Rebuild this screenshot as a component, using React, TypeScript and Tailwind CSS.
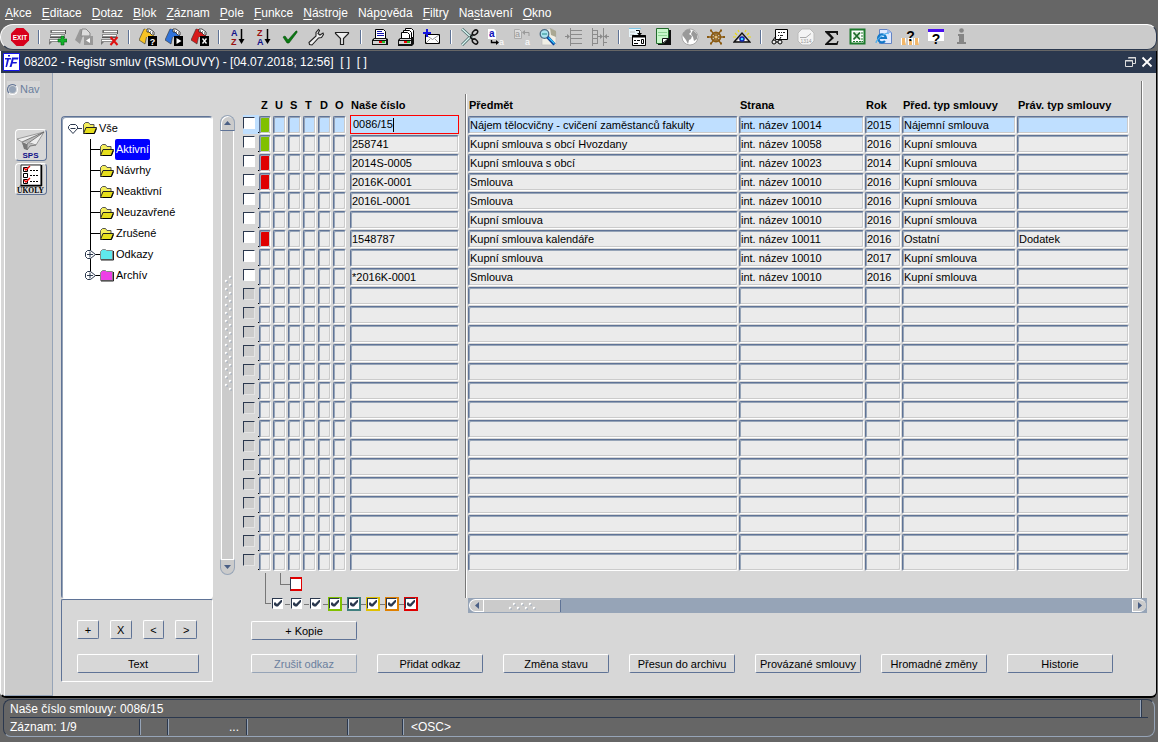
import type { ReactNode } from 'react'
import clsx from 'clsx'

const raised = 'border border-t-white border-l-white border-r-[#5f7396] border-b-[#5f7396]'
const sunken = 'border border-t-[#5f7396] border-l-[#5f7396] border-r-white border-b-white'

const menu: [string, string, string][] = [
  ['', 'A', 'kce'],
  ['', 'E', 'ditace'],
  ['', 'D', 'otaz'],
  ['', 'B', 'lok'],
  ['', 'Z', 'áznam'],
  ['', 'P', 'ole'],
  ['', 'F', 'unkce'],
  ['', 'N', 'ástroje'],
  ['Náp', 'o', 'věda'],
  ['', 'F', 'iltry'],
  ['Na', 's', 'tavení'],
  ['', 'O', 'kno'],
]

/* Toolbar drawings, all on an 18x18 grid */

function RecordLines() {
  return (
    <>
      <path d="M2 2h15v3H2zM1 6h15v4H1zM0 11h12v3H0z" fill="#8c8c8c" />
      <path d="M3 3.500h13M2 7.500h13M1 12.500h11" stroke="#fff" />
      <path d="M2 2v3M16.500 2v4M1 9.500h15" stroke="#555" />
      <path d="M0 14v3l3-3z" fill="#777" />
    </>
  )
}

function QueryCard({ fill, children }: { fill: string; children: ReactNode }) {
  return (
    <>
      <path d="M5 1l4 1-3 14-6-4z" fill={fill} stroke="#333" strokeWidth="0.6" />
      <path d="M6 1h4l5 4v4H6z" fill={fill} />
      <path d="M8 1h3l4 3v3h-2l-3-3H8z" fill="#fff" stroke="#222" strokeWidth="0.8" />
      <path d="M9 3h1M11 4h1M13 5h1" stroke="#222" />
      <path d="M9 8h9v10H9z" />
      {children}
    </>
  )
}

function SortMark({ top, bottom }: { top: string; bottom: string }) {
  return (
    <>
      <text x="2" y="8" fontSize="9" fontWeight="700" fill={top === 'A' ? '#118' : '#911'}>{top}</text>
      <text x="2" y="17" fontSize="9" fontWeight="700" fill={bottom === 'A' ? '#118' : '#911'}>{bottom}</text>
      <path d="M12.500 1v12" stroke="#000" strokeWidth="1.500" />
      <path d="M9.500 11h6l-3 5z" />
    </>
  )
}

const exit = (
  <>
    <path d="M5.500 0h7L18 5.500v7L12.500 18h-7L0 12.500v-7z" fill="#d8001c" />
    <text x="9" y="11.500" fontSize="6.500" fontWeight="700" textAnchor="middle" fill="#fff">EXIT</text>
  </>
)
const insertRow = (
  <>
    <RecordLines />
    <path d="M12 8h3v3h3v3h-3v3h-3v-3H9v-3h3z" fill="#13b32b" stroke="#075d14" strokeWidth="0.600" />
  </>
)
const copyRow = (
  <>
    <path d="M5 1l5 1-5 14-5-4z" fill="#999" />
    <path d="M7 1h4l4 4v3H6z" fill="#ddd" stroke="#888" />
    <path d="M9 8h9v9H9z" fill="#999" />
    <path d="M15 10v5l-4-2.500z" fill="#fff" />
  </>
)
const deleteRow = (
  <>
    <RecordLines />
    <path d="M9.500 9l7 8M16.500 9l-7 8" stroke="#e01010" strokeWidth="2" />
  </>
)
const enterQuery = (
  <QueryCard fill="#f7c325">
    <text x="13.500" y="16.500" fontSize="9" fontWeight="700" textAnchor="middle" fill="#fff">?</text>
  </QueryCard>
)
const runQuery = (
  <QueryCard fill="#2f72d8">
    <path d="M11.500 10v6l5-3z" fill="#fff" />
  </QueryCard>
)
const cancelQuery = (
  <QueryCard fill="#d81b1b">
    <path d="M11.500 10.500l4 5M15.500 10.500l-4 5" stroke="#fff" strokeWidth="1.300" />
  </QueryCard>
)
const check = <path d="M2 9l2-1 3 4 8-9h1v1.500L8 15H6z" fill="#0a7a12" stroke="#064f0b" strokeWidth="0.600" />
const wrench = (
  <path
    d="M11.500 1.500l1 1-1.500 3 2 1.500 3-2 .5 1.500-2 3-3 .5-6.500 7-2.500-.500-.500-2 7-6.500V4.500z"
    fill="#eee" stroke="#222" strokeWidth="1.100"
  />
)
const funnel = <path d="M2.500 4.500h13v1l-5 5v6h-3v-6l-5-5z" fill="#eee" stroke="#222" strokeWidth="1.200" />
const printer = (
  <>
    <path d="M4.500 1.500h8l2 2v7h-10z" fill="#fff" stroke="#000" />
    <path d="M6 3.500h5M6 5.500h7M6 7.500h7" stroke="#11a" />
    <path d="M3 10h12l2 1v6H1v-5z" fill="#111" />
    <path d="M3 11h12v1H3zM2 13h13v3H2z" fill="#d4d4d4" />
    <path d="M8 13h3v2H8z" fill="#e00" />
    <path d="M11 13h3v2h-3z" fill="#2b2" />
  </>
)
const printers = (
  <>
    <path d="M8.500 .5h6l2 2v7h-8z" fill="#fff" stroke="#000" />
    <path d="M6.500 2.500h6l2 2v6h-8z" fill="#fff" stroke="#000" />
    <path d="M4.500 4.500h6l2 2v5h-8z" fill="#fff" stroke="#000" />
    <path d="M3 10h11l3-1v7l-2 2H1v-6z" fill="#111" />
    <path d="M3 11h11v1H3zM2 13h12v3H2z" fill="#d4d4d4" />
    <path d="M7 13h3v2H7z" fill="#e00" />
    <path d="M10 13h3v2h-3z" fill="#2b2" />
  </>
)
const mail = (
  <>
    <path d="M2.500 6.500h14v9h-14z" fill="#fff" stroke="#000" />
    <path d="M3 7l6.500 4.500L16 7M3 15l4-4M16 15l-4-4" stroke="#777" fill="none" strokeWidth="0.800" />
    <path d="M3 1h2v3h3v2H5v3H3V6H0V4h3z" fill="#1515e0" />
  </>
)
const scissors = (
  <>
    <path d="M1 1l10 9M1 17L11 7" stroke="#4c6b6b" strokeWidth="3" />
    <path d="M1 1l10 9M1 17L11 7" stroke="#d9f6f2" strokeWidth="1.400" />
    <ellipse cx="14" cy="4.500" rx="3" ry="2" transform="rotate(-40 14 4.500)" fill="none" stroke="#111" strokeWidth="1.500" />
    <ellipse cx="14" cy="13.500" rx="3" ry="2" transform="rotate(40 14 13.500)" fill="none" stroke="#111" strokeWidth="1.500" />
    <path d="M9 9l3-3M9 8.500l3 3.500" stroke="#111" strokeWidth="1.600" />
  </>
)
const copyText = (
  <>
    <path d="M1 1h6l2 2v8H1z" fill="#fff" />
    <text x="2" y="9" fontSize="10" fontWeight="700" fill="#11b">a</text>
    <path d="M4.500 12v2.500h5" stroke="#000" fill="none" strokeWidth="1.400" />
    <path d="M9 12l3 2.500L9 17z" />
    <text x="12" y="17" fontSize="9" fill="#fff">a</text>
  </>
)
const pasteText = (
  <>
    <path d="M1.500 1.500h5l2 2v7h-7z" fill="#ddd" stroke="#aaa" />
    <text x="2" y="9" fontSize="9" fill="#999">a</text>
    <path d="M16 8V4.500h-4" stroke="#999" fill="none" />
    <path d="M12 2L9 4.500 12 7z" fill="#999" />
    <text x="12" y="17" fontSize="9" fill="#fff">a</text>
  </>
)
const find = (
  <>
    <path d="M5 1h9l3 3v13H3V9z" fill="#f0efe6" stroke="#bbb" strokeWidth="0.700" />
    <path d="M11 0l6 3v6l-5-2z" fill="#aaa893" />
    <circle cx="5.500" cy="6" r="4.300" fill="#a8e2ee" stroke="#4b6b84" strokeWidth="1.300" />
    <path d="M3 6h5" stroke="#288" />
    <path d="M8.500 9l7 7.500" stroke="#0b3f98" strokeWidth="3.200" />
    <path d="M9.500 9.500l6 6" stroke="#35c8ff" strokeWidth="1.300" />
  </>
)
const listIn = (
  <>
    <path d="M5.500 0v18M6 2.500h11M6 6.500h11M6 10.500h11M6 15.500h11M0 8.500h3" stroke="#8b8b8b" fill="none" />
    <path d="M2 6v5l3-2.500z" fill="#8b8b8b" />
  </>
)
const listOut = (
  <>
    <path d="M1.500 0v18M2 2.500h4M2 6.500h4M2 10.500h4M2 15.500h4M6.500 2v14M12.500 0v18M7 8.500h3M13 8.500h5M13 14.500h3" stroke="#8b8b8b" fill="none" />
    <path d="M9 6v5l3-2.500zM16 6v5l-3-2.500z" fill="#8b8b8b" />
  </>
)
const calcForm = (
  <>
    <path d="M0 0h11v9H0z" fill="#e9f6fb" />
    <path d="M0 .5h12" stroke="#7ec6e6" />
    <path d="M1 4h5M1 7h4" stroke="#bbb" />
    <path d="M3.500 7.500h13v10h-13z" fill="#fff" stroke="#000" />
    <path d="M3 8.500h14" stroke="#000" strokeWidth="2" />
    <path d="M5 12.500h2M8 12.500h3M5 15.500h4" stroke="#000" />
    <path d="M12.500 11.500h2v4h-2z" fill="none" stroke="#000" />
    <path d="M7 2.500h3.500V6" stroke="#000" fill="none" />
    <path d="M8 5h5l-2.500 3z" />
  </>
)
const note = (
  <>
    <path d="M3 2h13v15H3z" fill="#111" />
    <path d="M1.500 .5h12v15h-12z" fill="#c9f7cb" stroke="#226b2c" />
    <path d="M3 4.500h9M3 7.500h9" stroke="#8ed494" />
    <path d="M7.500 15.500v-5h6z" fill="#fff" stroke="#111" />
    <path d="M14 10v6H8z" fill="#111" />
  </>
)
const globe = (
  <>
    <circle cx="9" cy="9" r="8" fill="#fff" stroke="#999" strokeWidth="0.800" />
    <path d="M2 5l3-3 4-1 1 3-2 2 3 2-1 3-2 1-1 4-2-4-3-4zM12 2l4 4v5l-3 2-1-4-2-3z" fill="#999" />
  </>
)
const wheel = (
  <>
    <circle cx="9" cy="9" r="4.500" fill="none" stroke="#8a5a12" strokeWidth="1.800" />
    <path d="M9 5v8M1 9h16M4 2.500l10 13M14 2.500L4 15.500" stroke="#8a5a12" strokeWidth="1.300" />
    <circle cx="9" cy="9" r="1.500" fill="#e6c27c" />
    <path d="M3 1.500h2v2H3zM13 1.500h2v2h-2zM3 14.500h2v2H3zM13 14.500h2v2h-2zM0 8h2v2H0zM16 8h2v2h-2z" fill="#8a5a12" />
  </>
)
const eye = (
  <>
    <path d="M2 5l2 2M5 2l1 2M13 2l-1 2M16 5l-2 2M0 9h3M15 9h3" stroke="#eadb10" strokeWidth="1.200" />
    <path d="M1 14L9 5l8 9z" fill="#b9b9b9" stroke="#111" strokeWidth="1.300" />
    <path d="M4 13q5-7 10 0z" fill="#fff" />
    <circle cx="9" cy="11" r="2.800" fill="#1020b0" />
    <circle cx="9" cy="11" r="1.300" fill="#38e0ff" />
  </>
)
const inspect = (
  <>
    <path d="M4.500 1.500h12v10h-12z" fill="#fff" stroke="#000" />
    <path d="M7 4.500h2M10 4.500h1M12 4.500h2M7 7.500h1M9 7.500h3" stroke="#222" />
    <circle cx="3" cy="14" r="2" fill="#eee" stroke="#000" />
    <circle cx="9" cy="14" r="2" fill="#eee" stroke="#000" />
    <path d="M2 12l3-4M8 12l2-3M5 14h2" stroke="#000" />
  </>
)
const clock = (
  <>
    <path d="M5 1h8l4 4v8l-4 4H5l-4-4V5z" fill="#f4f4f4" stroke="#bbb" />
    <path d="M3 9.500h6l5-4" stroke="#aaa" fill="none" />
    <text x="9" y="15" fontSize="5" textAnchor="middle" fill="#999">1314</text>
  </>
)
const sum = (
  <path d="M2 3h13v4h-1l-1-2H6.500l4.500 5-5.500 5h8l1-2h1l-1 4H2v-1l6-6-6-6z" fill="#111" />
)
const excel = (
  <>
    <path d="M1.500 1.500h14v14h-14z" fill="#fff" stroke="#1d7a2d" strokeWidth="2" />
    <path d="M4 4h7v7H4z" fill="#d8edd9" />
    <path d="M4.500 4.500l6.500 7M11 4.500l-6.500 7" stroke="#1d6a2a" strokeWidth="1.800" />
    <path d="M13 4v10M4 13.500h10" stroke="#1d7a2d" strokeDasharray="2 1" />
  </>
)
const browser = (
  <>
    <path d="M4.500 1.500h8l4 3v11h-12z" fill="#dfeaff" stroke="#6383c4" />
    <path d="M12 1v4h5" fill="#9ab6ea" />
    <path d="M3 10h8a4 4 0 1 0-1 3" fill="none" stroke="#1479c8" strokeWidth="2.200" />
    <path d="M1 15q0-4 9-9 4-2 3 0" fill="none" stroke="#4fb0ee" strokeWidth="1.200" />
  </>
)
const people = (
  <>
    <path d="M0 10h5v7H0zM7 10h5v7H7zM13 10h5v7h-5z" fill="#fff" />
    <path d="M1 10h3v3l1 4H1zM8 12h3v5H8zM14 10h3v3l1 4h-4z" fill="#f2b76a" />
    <text x="9.500" y="13" fontSize="14" fontWeight="700" textAnchor="middle" fill="#000">?</text>
  </>
)
const windowHelp = (
  <>
    <path d="M1 2h16v11H1z" fill="#fff" />
    <path d="M1 1h16v3H1z" fill="#4a10f0" />
    <text x="9" y="16" fontSize="14" fontWeight="700" textAnchor="middle" fill="#000">?</text>
  </>
)
const info = (
  <>
    <circle cx="8.500" cy="2.500" r="2.300" fill="#858585" />
    <path d="M5 6h6v8h2v2H4v-2h2V8H5z" fill="#858585" />
  </>
)

const tools: [string, ReactNode][][] = [
  [['Konec', exit]],
  [['Nový záznam', insertRow], ['Kopírovat záznam', copyRow], ['Smazat záznam', deleteRow]],
  [['Zadat dotaz', enterQuery], ['Spustit dotaz', runQuery], ['Zrušit dotaz', cancelQuery]],
  [
    ['Seřadit vzestupně', <SortMark top="A" bottom="Z" />],
    ['Seřadit sestupně', <SortMark top="Z" bottom="A" />],
    ['Potvrdit', check],
    ['Nástroje', wrench],
    ['Filtr', funnel],
  ],
  [['Tisk', printer], ['Tisk sestav', printers], ['Pošta', mail]],
  [
    ['Vyjmout', scissors],
    ['Kopírovat', copyText],
    ['Vložit', pasteText],
    ['Hledat', find],
    ['Rozbalit', listIn],
    ['Sbalit', listOut],
  ],
  [['Formulář', calcForm], ['Poznámka', note], ['Web', globe], ['Řízení', wheel], ['Náhled', eye]],
  [
    ['Detail', inspect],
    ['Čas', clock],
    ['Součet', sum],
    ['Excel', excel],
    ['Prohlížeč', browser],
    ['Uživatelé', people],
    ['Nápověda okna', windowHelp],
    ['Informace', info],
  ],
]

function Toolbar() {
  return (
    <div className="mr-px flex h-[26px] items-center rounded-l-2xl rounded-r-xl border border-white border-r-[#2b384e] border-b-[#2b384e] bg-[#cbcbcb] pl-1.5">
      {tools.map((group, i) => (
        <div key={i} className="flex items-center">
          {i > 0 && <div className="mx-[5px] h-3.5 w-0.5 border-r border-l border-r-white border-l-[#5f7396]" />}
          {group.map(([label, icon]) => (
            <button key={label} type="button" aria-label={label} className="flex h-6 w-[26px] items-center justify-center">
              <svg viewBox="0 0 18 18" className="size-[18px]" fill="#000">{icon}</svg>
            </button>
          ))}
        </div>
      ))}
    </div>
  )
}

function TitleBar() {
  return (
    <div className="flex h-[22px] items-center gap-1 bg-[#2b384e] pr-[3px] pl-0.5 text-[12px] text-white">
      <svg viewBox="0 0 17 18" className="h-[18px] w-[17px]">
        <path d="M.5.5h16v17H.5z" fill="#fff" stroke="#1414e8" />
        <path d="M2 5h6v1.500H6L4 14H2.500L4 6.500H2zM5 2h2v1.500H5z" fill="#1616d8" />
        <path d="M9 4.500h6.500L15 6.500h-4.500L10 9h4l-.5 1.500h-4L8.500 14h-2L8 9z" fill="#1616d8" />
      </svg>
      <h1 className="flex-1 whitespace-pre">08202 - Registr smluv (RSMLOUVY) - [04.07.2018; 12:56]  [ ]  [ ]</h1>
      <button type="button" aria-label="Obnovit">
        <svg viewBox="0 0 12 12" className="size-3" fill="none" stroke="#ddd">
          <path d="M3.500 1.500h7v6h-3M3 2h8M.5 4.500h7v6h-7zM0 5h8" />
        </svg>
      </button>
      <button type="button" aria-label="Zavřít">
        <svg viewBox="0 0 12 12" className="size-3" stroke="#fff" strokeWidth="1.800">
          <path d="M1.500 1.500l9 9M10.500 1.500l-9 9" />
        </svg>
      </button>
    </div>
  )
}

function SideBar() {
  return (
    <aside className="flex w-[49px] shrink-0 flex-col border-r border-b border-l border-l-white border-r-[#96a4b7] border-b-[#96a4b7] bg-[#cbcbcb]">
      <label className="mt-2 ml-0.5 flex h-[17px] w-[33px] items-center gap-0.5 bg-[#d7d7d7] text-[11px] text-[#6b7f9e]">
        <input
          type="radio"
          disabled
          className="size-[11px] shrink-0 appearance-none rounded-full border border-[#5f7396] border-r-white border-b-white bg-[#96a4b7] shadow-[inset_0_0_0_1px_#d7d7d7]"
        />
        Nav
      </label>
      <div className="mt-[31px] ml-2.5 flex flex-col gap-0.5">
        <button type="button" aria-label="SPS" className={clsx('size-8 rounded-sm bg-[#d7d7d7]', raised)}>
          <svg viewBox="0 0 30 30" className="size-[30px]">
            <path d="M1 9l27-7-8 13-6-2-5 6-3-7z" fill="#eee" stroke="#888" strokeWidth="0.800" />
            <path d="M6 12L28 2 11 14v6l3-4 6-1" fill="#bbb" stroke="#666" strokeWidth="0.800" />
            <path d="M6 12l2 7 3 1v-6z" fill="#777" />
            <text x="14.500" y="28" fontSize="8" fontWeight="700" textAnchor="middle" fill="#111188">SPS</text>
          </svg>
        </button>
        <button type="button" aria-label="Úkoly" className={clsx('size-8 rounded-sm bg-[#d7d7d7]', raised)}>
          <svg viewBox="0 0 30 30" className="size-[30px]">
            <path d="M5 1h20v21H5z" fill="#fff" stroke="#333" />
            <path d="M25.500 1v21M5 21.500h21" stroke="#000" strokeWidth="1.500" />
            <path d="M7.500 3.500h4v4h-4zM7.500 9.500h4v4h-4zM7.500 15.500h4v4h-4z" fill="none" stroke="#000" />
            <path d="M8 4l2 2 4-4M8 16l2 2 4-4" stroke="#e00" strokeWidth="1.400" fill="none" />
            <path d="M14 6.500h9M14 11.500h9M14 17.500h9" stroke="#000" strokeDasharray="2 1" />
            <text x="14.500" y="29" fontSize="7.500" fontWeight="700" textAnchor="middle" fontFamily="Liberation Serif, serif">ÚKOLY</text>
          </svg>
        </button>
      </div>
    </aside>
  )
}

function OpenFolder() {
  return (
    <svg viewBox="0 0 14 12" className="h-3 w-3.5">
      <path d="M.5 10.500v-8l2-2h3l1.500 2h4v3" fill="#f4ee5a" stroke="#555" />
      <path d="M.5 11.500l2.500-6h10.500l-2.500 6z" fill="#e6de1c" stroke="#222" />
      <path d="M3 11.500h8.500l2-5" stroke="#000" fill="none" />
    </svg>
  )
}

function ClosedFolder({ fill }: { fill: string }) {
  return (
    <svg viewBox="0 0 14 12" className="h-3 w-3.5">
      <path d="M.5 10.500v-8l2-2h3l1 1h6v9z" fill={fill} stroke="#888" />
      <path d="M1 11h12.500V2" stroke="#222" fill="none" />
    </svg>
  )
}

const nodes = [
  { label: 'Aktivní', selected: true },
  { label: 'Návrhy' },
  { label: 'Neaktivní' },
  { label: 'Neuzavřené' },
  { label: 'Zrušené' },
  { label: 'Odkazy', fill: '#5fe9ee' },
  { label: 'Archív', fill: '#ee3fe6' },
]

function Tree() {
  return (
    <ul className={clsx('flex-1 rounded-sm bg-white text-[11px] shadow-[inset_1px_1px_#96a4b7]', sunken)}>
      <li>
        <div className="flex h-[22px] items-center pl-[5px]">
          <svg viewBox="0 0 15 13" className="mr-px h-[13px] w-[15px]" fill="#fff" stroke="#2b384e">
            <path d="M3.500 2.500h5l2 2v2l-4.500 5-4.500-5v-2zM3.500 6.500h5M10 6.500h5" />
          </svg>
          <OpenFolder />
          <span className="ml-0.5">Vše</span>
        </div>
        <ul>
          {nodes.map((node, i) => (
            <li key={node.label} className="flex h-[21px] items-center pl-[22px]">
              <svg viewBox="0 0 16 21" className="h-[21px] w-4" fill="#fff" stroke="#000">
                <path d={i === nodes.length - 1 ? 'M6.500 0v10' : 'M6.500 0v21'} />
                <path d="M7 10.500h9" />
                {node.fill && <path d="M3.500 6.500h3l5 4-5 4h-3l-2-2v-4zM3 10.500h6M6 7.500v6" stroke="#2b384e" />}
              </svg>
              {node.fill ? <ClosedFolder fill={node.fill} /> : <OpenFolder />}
              <span className={clsx('ml-px rounded-xs px-px py-0.5', node.selected && 'bg-[#0000ff] text-white')}>{node.label}</span>
            </li>
          ))}
        </ul>
      </li>
    </ul>
  )
}

function Button({ children, className, disabled }: { children: ReactNode; className?: string; disabled?: boolean }) {
  return (
    <button
      type="button"
      disabled={disabled}
      className={clsx(
        'block h-[19px] rounded-xs text-center text-[11px] leading-4',
        raised,
        disabled && 'border-r-[#96a4b7] border-b-[#96a4b7] text-[#6b7f9e]',
        className,
      )}
    >
      {children}
    </button>
  )
}

function TreePanel() {
  return (
    <div className="mt-[43px] ml-2 flex w-[152px] shrink-0 flex-col">
      <Tree />
      <div className={clsx('mb-3.5 h-[83px] rounded-xs px-[15px] pt-5', sunken)}>
        <div className="flex gap-[11px]">
          {['+', 'X', '<', '>'].map((label) => (
            <Button key={label} className="w-[22px]">{label}</Button>
          ))}
        </div>
        <Button className="mt-[15px] w-[122px]">Text</Button>
      </div>
    </div>
  )
}

function Grip({ className, cols, rows }: { className?: string; cols: number; rows: number }) {
  const dots: ReactNode[] = []
  for (let r = 0; r < rows; r++) {
    for (let c = 0; c < cols; c++) {
      if ((r + c) % 2 === 1) {
        dots.push(
          <g key={`${r}-${c}`}>
            <circle cx={c * 4 + 2} cy={r * 4 + 2} r="1.200" fill="#fff" />
            <circle cx={c * 4 + 3} cy={r * 4 + 3} r="0.800" fill="#96a4b7" />
          </g>,
        )
      }
    }
  }
  return (
    <svg width={cols * 4} height={rows * 4} className={className}>
      {dots}
    </svg>
  )
}

function VerticalScroll() {
  return (
    <div className="mt-[42px] mb-[121px] ml-[7px] flex w-[15px] shrink-0 flex-col">
      <button type="button" aria-label="Nahoru" className="flex h-4 items-center justify-center rounded-t-lg border border-[#96a4b7] border-b-[#5f7396] bg-[#cbcbcb] shadow-[inset_1px_1px_#fff]">
        <svg viewBox="0 0 7 4" className="h-1 w-[7px]" fill="#4a5f85"><path d="M3.500 0L7 4H0z" /></svg>
      </button>
      <div className="mx-px flex flex-1 items-center justify-center border-r border-l border-white bg-[#cbcbcb]">
        <Grip cols={2} rows={29} className="mb-6" />
      </div>
      <button type="button" aria-label="Dolů" className="flex h-4 items-center justify-center rounded-b-lg border border-[#96a4b7] border-t-white bg-[#cbcbcb]">
        <svg viewBox="0 0 7 4" className="h-1 w-[7px]" fill="#4a5f85"><path d="M0 0h7L3.500 4z" /></svg>
      </button>
    </div>
  )
}

const records = [
  { state: 'green', no: '0086/15', subject: 'Nájem tělocvičny - cvičení zaměstanců fakulty', party: 'int. název 10014', year: '2015', type: 'Nájemní smlouva', legal: '' },
  { state: 'green', no: '258741', subject: 'Kupní smlouva s obcí Hvozdany', party: 'int. název 10058', year: '2016', type: 'Kupní smlouva', legal: '' },
  { state: 'red', no: '2014S-0005', subject: 'Kupní smlouva s obcí', party: 'int. název 10023', year: '2014', type: 'Kupní smlouva', legal: '' },
  { state: 'red', no: '2016K-0001', subject: 'Smlouva', party: 'int. název 10010', year: '2016', type: 'Kupní smlouva', legal: '' },
  { state: '', no: '2016L-0001', subject: 'Smlouva', party: 'int. název 10010', year: '2016', type: 'Kupní smlouva', legal: '' },
  { state: '', no: '', subject: 'Kupní smlouva', party: 'int. název 10010', year: '2016', type: 'Kupní smlouva', legal: '' },
  { state: 'red', no: '1548787', subject: 'Kupní smlouva kalendáře', party: 'int. název 10011', year: '2016', type: 'Ostatní', legal: 'Dodatek' },
  { state: '', no: '', subject: 'Kupní smlouva', party: 'int. název 10010', year: '2017', type: 'Kupní smlouva', legal: '' },
  { state: '', no: '*2016K-0001', subject: 'Smlouva', party: 'int. název 10010', year: '2016', type: 'Kupní smlouva', legal: '' },
]
const emptyRecord = { state: '', no: '', subject: '', party: '', year: '', type: '', legal: '' }
const rows = Array.from({ length: 24 }, (_, i) => records[i] ?? emptyRecord)

function Field({ label, value, current }: { label: string; value: string; current: boolean }) {
  return (
    <input
      aria-label={label}
      defaultValue={value}
      className={clsx(
        'block h-[18px] w-full rounded-xs pl-px text-[11px] leading-4 shadow-[inset_1px_1px_#96a4b7,inset_-1px_-1px_#cbcbcb] outline-none',
        sunken,
        current ? 'bg-[#bfdfff]' : 'bg-[#ebebeb]',
      )}
    />
  )
}

const flags = ['Z', 'U', 'S', 'T', 'D', 'O']

function KeyTable() {
  return (
    <table className="w-[216px] table-fixed">
      <colgroup>
        <col className="w-4" />
        <col className="w-3.5" />
        <col className="w-[15px]" />
        <col className="w-[15px]" />
        <col className="w-[15px]" />
        <col className="w-[15px]" />
        <col className="w-[17px]" />
        <col />
      </colgroup>
      <thead>
        <tr className="h-[21px] text-left text-[11px]">
          <th aria-label="Výběr" />
          {flags.map((flag) => (
            <th key={flag} className="p-0 pt-px pl-0.5 align-middle">{flag}</th>
          ))}
          <th className="p-0 pt-px pl-px align-middle">Naše číslo</th>
        </tr>
      </thead>
      <tbody>
        {rows.map((row, i) => (
          <tr key={i} className="h-[19px]">
            <td className={clsx('p-0', i === 0 && 'bg-[#bfdfff]')}>
              <div className="flex items-end justify-between">
                <input
                  type="checkbox"
                  aria-label={`Vybrat záznam ${i + 1}`}
                  disabled={i >= records.length}
                  className="mb-1 size-3 appearance-none border border-t-[#2b384e] border-r-white border-b-white border-l-[#2b384e] bg-white disabled:border-r-[#e4e4e4] disabled:border-b-[#e4e4e4] disabled:bg-[#cbcbcb]"
                />
                <span className="size-px bg-black" />
              </div>
            </td>
            {flags.map((flag) => (
              <td key={flag} className="p-0">
                <div
                  className={clsx(
                    'h-[18px] rounded-xs shadow-[inset_1px_1px_#96a4b7,inset_-1px_-1px_#cbcbcb]',
                    sunken,
                    flag === 'Z' ? 'w-3' : 'w-[13px]',
                    flag === 'Z' && row.state === 'green' && 'bg-[#80c000]',
                    flag === 'Z' && row.state === 'red' && 'bg-[#e00000]',
                    flag === 'Z' && !row.state && 'bg-[#ebebeb]',
                    flag !== 'Z' && (i === 0 ? 'bg-[#bfdfff]' : 'bg-[#ebebeb]'),
                  )}
                />
              </td>
            ))}
            <td className="p-0">
              {i === 0 ? (
                <div className="flex h-[19px] items-center border border-[#ff0000] bg-[#bfdfff] pl-0.5">
                  <input
                    aria-label="Naše číslo 1"
                    defaultValue={row.no}
                    className="field-sizing-content h-4 text-[11px] outline-none"
                  />
                  <span className="h-3.5 w-px bg-black" />
                </div>
              ) : (
                <Field label={`Naše číslo ${i + 1}`} value={row.no} current={false} />
              )}
            </td>
          </tr>
        ))}
      </tbody>
    </table>
  )
}

const columns = [
  ['subject', 'Předmět'],
  ['party', 'Strana'],
  ['year', 'Rok'],
  ['type', 'Před. typ smlouvy'],
  ['legal', 'Práv. typ smlouvy'],
] as const

function RecordTable() {
  return (
    <table className="w-full table-fixed">
      <colgroup>
        <col />
        <col className="w-[126px]" />
        <col className="w-[37px]" />
        <col className="w-[115px]" />
        <col className="w-[113px]" />
      </colgroup>
      <thead>
        <tr className="h-[21px] text-left text-[11px]">
          {columns.map(([key, title]) => (
            <th key={key} className="p-0 pt-px pl-px align-middle whitespace-nowrap">{title}</th>
          ))}
        </tr>
      </thead>
      <tbody>
        {rows.map((row, i) => (
          <tr key={i} className="h-[19px]">
            {columns.map(([key, title]) => (
              <td key={key} className="p-0 pr-px">
                <Field label={`${title} ${i + 1}`} value={row[key]} current={i === 0} />
              </td>
            ))}
          </tr>
        ))}
      </tbody>
    </table>
  )
}

const legend = [
  { label: 'Základní', frame: 'bg-transparent' },
  { label: 'Uložené', frame: 'bg-transparent' },
  { label: 'Schválené', frame: 'bg-transparent' },
  { label: 'Zelené', frame: 'bg-[#80c000]' },
  { label: 'Modré', frame: 'bg-[#408080]' },
  { label: 'Žluté', frame: 'bg-[#e0c000]' },
  { label: 'Oranžové', frame: 'bg-[#e08000]' },
  { label: 'Červené', frame: 'bg-[#e00000]' },
]

function Legend() {
  return (
    <div className="flex pt-0.5 pl-[22px]">
      <div className="h-[31px] w-1.5 border-b border-l border-[#777]" />
      <div>
        <div className="flex pl-[9px]">
          <div className="h-3 w-2.5 border-b border-l border-[#777]" />
          <input
            type="checkbox"
            aria-label="Bez stavu"
            className="mt-1 h-3.5 w-3 appearance-none border-t-2 border-r border-b-2 border-l border-t-[#e00000] border-r-[#e00000] border-b-[#e00000] border-l-[#2b384e] bg-white"
          />
        </div>
        <div className="mt-1.5 flex items-center">
          {legend.map((item, i) => (
            <div key={item.label} className="flex items-center">
              {i > 0 && <div className="h-px w-[5px] bg-[#777]" />}
              <label className={clsx('grid size-3.5 p-px', item.frame)}>
                <input
                  type="checkbox"
                  defaultChecked
                  aria-label={item.label}
                  className="col-start-1 row-start-1 size-[11px] appearance-none border border-t-[#2b384e] border-r-white border-b-white border-l-[#2b384e] bg-white"
                />
                <svg viewBox="0 0 11 11" className="pointer-events-none col-start-1 row-start-1 size-[11px]">
                  <path d="M2 5l1-1 2 2 4-4h1v2L6 8.500H4L2 7z" fill="#2b384e" />
                </svg>
              </label>
            </div>
          ))}
        </div>
      </div>
    </div>
  )
}

function HorizontalScroll() {
  return (
    <div className="ml-[3px] flex h-[15px] items-stretch bg-[#96a4b7] py-px pl-px">
      <button type="button" aria-label="Vlevo" className="flex w-3.5 items-center justify-center rounded-l-lg border border-r-0 border-white bg-[#cbcbcb]">
        <svg viewBox="0 0 4 7" className="h-[7px] w-1" fill="#4a5f85"><path d="M4 0v7L0 3.500z" /></svg>
      </button>
      <div className="flex w-[78px] items-center justify-center border-t border-r border-l border-t-white border-r-[#5f7396] border-l-white bg-[#cbcbcb]">
        <Grip cols={7} rows={2} />
      </div>
      <div className="flex-1" />
      <button type="button" aria-label="Vpravo" className="mr-px flex w-3.5 items-center justify-center rounded-r-lg border border-r-0 border-white bg-[#cbcbcb]">
        <svg viewBox="0 0 4 7" className="h-[7px] w-1" fill="#4a5f85"><path d="M0 0v7l4-3.500z" /></svg>
      </button>
    </div>
  )
}

const actions = ['Zrušit odkaz', 'Přidat odkaz', 'Změna stavu', 'Přesun do archivu', 'Provázané smlouvy', 'Hromadné změny', 'Historie']

function Contracts() {
  return (
    <main className="ml-2 flex min-w-0 flex-1 flex-col pt-2 pr-[9px]">
      <div className="flex">
        <div className="w-[222px] shrink-0 pt-[13px]">
          <KeyTable />
          <Legend />
        </div>
        <div className="min-w-0 flex-1">
          <div className="flex h-[517px]">
            <div className="mt-[13px] min-w-0 flex-1 border-l border-[#777] pl-0.5 shadow-[inset_1px_0_#fff]">
              <RecordTable />
            </div>
            <div className="mr-1 ml-[11px] w-0.5 border-r border-l border-r-white border-l-[#777]" />
          </div>
          <HorizontalScroll />
        </div>
      </div>
      <div className="mt-2 pl-2">
        <Button className="w-[106px]">+ Kopie</Button>
        <div className="mt-3.5 flex gap-5">
          {actions.map((action, i) => (
            <Button key={action} disabled={i === 0} className="w-[106px] whitespace-nowrap">{action}</Button>
          ))}
        </div>
      </div>
    </main>
  )
}

const statusCell = 'h-4 border-r border-[#96a4b7] shadow-[inset_-1px_0_#2b384e]'

function StatusBar() {
  return (
    <footer className="mx-[3px] mt-px mb-[5px] rounded-lg border border-t-[#2b384e] border-r-[#96a4b7] border-b-[#96a4b7] border-l-[#2b384e] px-1.5 text-[12px] text-white">
      <div className="flex h-[18px] border-b border-[#2b384e]">
        <p className="flex-1 leading-[18px]">Naše číslo smlouvy: 0086/15</p>
        <div className="mr-1.5 w-0.5 border-r border-l border-r-[#2b384e] border-l-[#96a4b7]" />
      </div>
      <div className="flex h-[18px] items-center leading-4">
        <span className={clsx('w-[131px]', statusCell)}>Záznam: 1/9</span>
        <span className={clsx('w-7', statusCell)} />
        <span className={clsx('w-[79px] pr-2 text-right', statusCell)}>...</span>
        <span className={clsx('w-[101px]', statusCell)} />
        <span className={clsx('w-[55px]', statusCell)} />
        <span className="pl-[7px]">&lt;OSC&gt;</span>
      </div>
    </footer>
  )
}

export default function App() {
  return (
    <div className="flex min-h-screen flex-col bg-[#666] font-['Liberation_Sans',Arial,sans-serif] text-black">
      <nav className="flex h-6 items-center gap-2.5 pt-0.5 pl-[5px] text-[12px] text-white">
        {menu.map(([before, key, after]) => (
          <button key={before + key + after} type="button">
            {before}
            <span className="underline underline-offset-2">{key}</span>
            {after}
          </button>
        ))}
      </nav>
      <Toolbar />
      <div className="mt-px mr-px flex flex-1 flex-col rounded-b-md border-r border-b-2 border-l border-r-black border-b-black border-l-white bg-[#d7d7d7]">
        <TitleBar />
        <div className="flex flex-1 pl-[3px]">
          <SideBar />
          <TreePanel />
          <VerticalScroll />
          <Contracts />
        </div>
      </div>
      <StatusBar />
    </div>
  )
}
